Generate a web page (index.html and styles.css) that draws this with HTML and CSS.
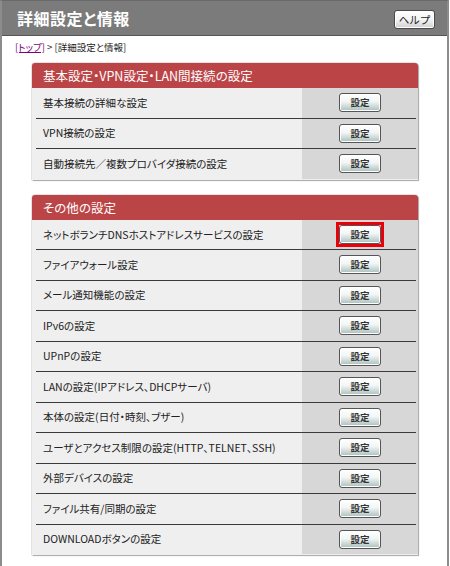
FILE: index.html
```html
<!DOCTYPE html>
<html lang="ja">
<head>
<meta charset="utf-8">
<title>詳細設定と情報</title>
<link rel="stylesheet" href="styles.css">
</head>
<body>
<div class="frame">
  <div class="titlebar">
    <h1 class="title">詳細設定と情報</h1>
    <button class="help">ヘルプ</button>
  </div>
  <div class="content">
    <div class="crumb"><a class="crumb-link" href="#">[トップ]</a> &gt; [詳細設定と情報]</div>

    <section class="box">
      <div class="box-head">基本設定・VPN設定・LAN間接続の設定</div>
      <div class="row first"><span class="label">基本接続の詳細な設定</span><span class="action"><button class="btn">設定</button></span></div>
      <div class="row"><span class="label">VPN接続の設定</span><span class="action"><button class="btn">設定</button></span></div>
      <div class="row"><span class="label">自動接続先／複数プロバイダ接続の設定</span><span class="action"><button class="btn">設定</button></span></div>
    </section>

    <section class="box">
      <div class="box-head">その他の設定</div>
      <div class="row first"><span class="label">ネットボランチDNSホストアドレスサービスの設定</span><span class="action"><span class="mark"><button class="btn">設定</button></span></span></div>
      <div class="row"><span class="label">ファイアウォール設定</span><span class="action"><button class="btn">設定</button></span></div>
      <div class="row"><span class="label">メール通知機能の設定</span><span class="action"><button class="btn">設定</button></span></div>
      <div class="row"><span class="label">IPv6の設定</span><span class="action"><button class="btn">設定</button></span></div>
      <div class="row"><span class="label">UPnPの設定</span><span class="action"><button class="btn">設定</button></span></div>
      <div class="row"><span class="label">LANの設定(IPアドレス、DHCPサーバ)</span><span class="action"><button class="btn">設定</button></span></div>
      <div class="row"><span class="label">本体の設定(日付・時刻、ブザー)</span><span class="action"><button class="btn">設定</button></span></div>
      <div class="row"><span class="label">ユーザとアクセス制限の設定(HTTP、TELNET、SSH)</span><span class="action"><button class="btn">設定</button></span></div>
      <div class="row"><span class="label">外部デバイスの設定</span><span class="action"><button class="btn">設定</button></span></div>
      <div class="row"><span class="label">ファイル共有/同期の設定</span><span class="action"><button class="btn">設定</button></span></div>
      <div class="row"><span class="label">DOWNLOADボタンの設定</span><span class="action"><button class="btn">設定</button></span></div>
    </section>
  </div>
</div>
</body>
</html>
```
FILE: styles.css
```css
html, body {
  margin: 0;
  padding: 0;
  background: #ffffff;
}
body {
  font-family: "Noto Sans CJK JP", "Noto Sans", sans-serif;
  font-feature-settings: "palt";
  color: #222;
}
.frame {
  width: 445px;
  min-height: 566px;
  border-left: 2px solid #8c8c8c;
  border-right: 2px solid #8c8c8c;
  border-top: 1px solid #6a6a6a;
  box-sizing: content-box;
}
.titlebar {
  height: 34px;
  background: #7b7b7b;
  border-bottom: 1px solid #555;
  display: flex;
  align-items: center;
  justify-content: space-between;
  padding: 0 12px 0 15px;
}
.title {
  margin: 0;
  font-size: 16px;
  font-weight: bold;
  color: #fff;
  letter-spacing: 0.5px;
  line-height: 20px;
  padding-bottom: 1px;
}
.help {
  width: 41px;
  height: 19px;
  margin-top: 3px;
  padding: 0;
  font-family: inherit;
  font-size: 10.5px;
  line-height: 15px;
  color: #222;
  background: linear-gradient(#ffffff 0%, #f4f4f4 50%, #cfcfcf 100%);
  border: 1px solid #4a4a4a;
  border-radius: 3px;
  box-shadow: inset 0 0 0 1px #fff;
}
.content {
  padding: 5px 28px 0 30px;
}
.crumb {
  font-size: 9.5px;
  line-height: 12px;
  margin-left: -17px;
  margin-bottom: 10px;
  color: #222;
}
.crumb-link {
  color: #800080;
  text-decoration: underline;
}
.box {
  width: 386px;
  margin-bottom: 15px;
  background: #efefef;
  border-radius: 3px 3px 0 0;
  box-shadow: 1px 1px 1px #a8a8a8, 0 0 0 0.5px #c8c8c8;
  padding-bottom: 1px;
}
.box-head {
  height: 25px;
  line-height: 25px;
  background: #bb4447;
  color: #fff;
  font-size: 12.5px;
  padding-left: 11px;
  border-radius: 3px 3px 0 0;
}
.row {
  display: grid;
  grid-template-columns: 270px 1fr;
  align-items: center;
  height: 30.5px;
  background:
    linear-gradient(#3a3a3a, #3a3a3a) 4px 0 / calc(100% - 6px) 1px no-repeat,
    linear-gradient(to right, #efefef 270px, #d7d7d7 270px);
}
.row.first {
  height: 29.5px;
  background: linear-gradient(to right, #efefef 270px, #d7d7d7 270px);
}
.label {
  padding-left: 11px;
  font-size: 10.5px;
  color: #222;
  white-space: nowrap;
}
.action {
  display: flex;
  justify-content: center;
  align-items: center;
}
.btn {
  width: 42px;
  height: 19px;
  padding: 0;
  font-family: inherit;
  font-size: 9.5px;
  font-weight: bold;
  line-height: 15px;
  color: #333;
  background: linear-gradient(#ffffff 0%, #f2f6f5 45%, #a9bfbd 100%);
  border: 1px solid #555;
  border-radius: 3px;
  box-shadow: inset 0 0 0 1px #fff;
}
.row:not(.first) .btn {
  margin-top: 1px;
}
.mark {
  display: flex;
  outline: 3px solid #e8000b;
  outline-offset: 0;
}
```
